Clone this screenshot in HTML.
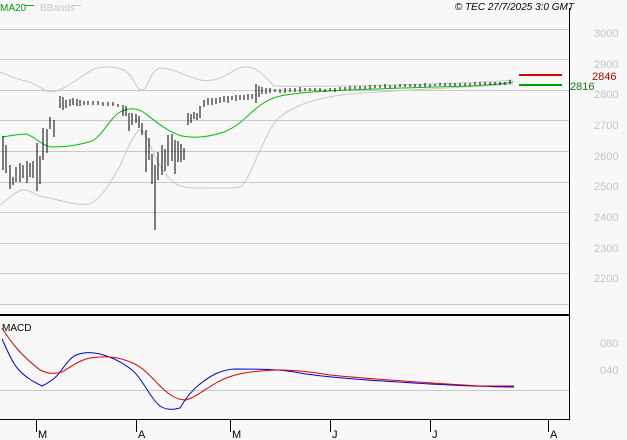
<!DOCTYPE html><html><head><style>body{margin:0;background:#f8f8f8}svg{display:block}text{font-family:"Liberation Sans",sans-serif}</style></head><body>
<svg width="627" height="440" viewBox="0 0 627 440">
<rect width="627" height="440" fill="#f8f8f8"/>
<g stroke="#c8c8c8" stroke-width="1">
<path d="M0 29.5H569M0 59.5H569M0 90.5H569M0 120.5H569M0 151.5H569M0 182.5H569M0 212.5H569M0 243.5H569M0 273.5H569M0 304.5H569M0 390.5H569"/>
</g>
<g fill="#c4c4c4" font-size="11">
<text x="594" y="37">3000</text><text x="594" y="68">2900</text><text x="594" y="98">2800</text><text x="594" y="129">2700</text><text x="594" y="160">2600</text><text x="594" y="190">2500</text><text x="594" y="221">2400</text><text x="594" y="252">2300</text><text x="594" y="282">2200</text>
<text x="600" y="347">080</text><text x="600" y="374">040</text>
</g>
<path d="M569.5 8V419M0 419.5H570" stroke="#000" fill="none"/>
<path d="M0 315H569" stroke="#000" stroke-width="2"/>
<g stroke="#000"><path d="M36.5 419V432M136.5 419V432M230.5 419V432M330.5 419V432M430.5 419V432M548.5 419V432"/></g>
<g font-size="11" fill="#000"><text x="38" y="438">M</text><text x="138" y="438">A</text><text x="232" y="438">M</text><text x="332" y="438">J</text><text x="432" y="438">J</text><text x="550" y="438">A</text></g>
<text x="0" y="11" font-size="10" fill="#00a000">MA20</text><path d="M25 5.5H34" stroke="#00c000"/>
<text x="40" y="11" font-size="10" fill="#c8c8c8">BBands</text><path d="M72 5.5H81" stroke="#c8c8c8"/>
<text x="574" y="10" font-size="10" font-style="italic" text-anchor="end" fill="#000">© TEC 27/7/2025 3:0 GMT</text>
<path fill="none" stroke="#c8c8c8" d="M0 72C10 76 18 80 26 81C36 83 44 92 52 92C66 90 80 76 94 69C104 66 114 66 124 70C134 76 136 90 142 90C148 90 150 70 160 68C172 68 180 74 200 80C222 84 232 68 244 67C258 66 266 78 274 86C300 87 330 86 400 85C460 83 490 82 513 80"/>
<path fill="none" stroke="#c8c8c8" d="M0 205C8 200 14 192 22 190C30 189 36 196 44 197C60 200 76 206 90 204C104 196 112 180 120 166C126 152 132 138 138 131C142 128 144 132 148 140C154 156 162 172 172 181C180 188 190 188 200 188C220 188 236 189 242 186C250 176 256 158 262 146C268 134 272 124 280 117C296 104 320 97 350 94C400 90 440 89 513 84"/>
<path fill="none" stroke="#00c000" d="M2 137C10 136 18 134 26 134C34 136 42 146 52 147C70 147 82 144 92 141C102 136 110 118 120 112C130 107 138 108 146 114C156 122 168 132 182 136C192 138 206 138 224 132C240 126 250 112 262 104C272 97 282 95 300 93C330 90 400 88 470 86C490 85 500 84 513 82"/>
<g stroke="#000" fill="none" shape-rendering="crispEdges">
<path d="M3 136V170M6 145V173M10 165V189M13 177V185M16 167V182M20 163V182M23 165V178M27 161V183M30 163V177M33 161V178M37 143V191M40 156V184M43 128V160M47 129V153M50 117V129M54 120V137M60 96V108M63 97V110M66 100V108M70 99V106M73 98V105M77 99V106M80 100V106M84 101V105M88 101V105M93 101V105M98 101V105M103 102V106M108 102V106M113 102V106M118 104V107M123 105V116M126 106V116M129 113V131M132 113V125M136 114V123M139 116V128M142 123V135M146 130V172M149 138V160M152 154V184M155 165V230M158 152V180M162 145V175M165 149V171M168 135V166M172 134V161M175 140V174M178 141V162M181 144V162M184 148V160M188 113V125M191 114V123M194 112V119M197 113V120M200 106V118M204 100V107M208 98V105M212 98V105M216 98V104M220 97V103M224 96V102M228 96V103M232 96V100M236 95V101M240 95V100M244 95V100M248 94V100M252 94V99M256 84V103M259 86V97M262 87V94M266 88V94M270 88V93M275 89V92M280 89V93M285 88V93M290 88V92M295 88V92M300 87V92M305 88V91M310 88V91M315 88V91M320 88V91M325 89V92M330 88V91M335 88V92M340 87V90M345 87V90M350 86V90M355 86V89M360 86V89M365 86V89M370 85V89M375 85V88M380 85V88M385 84V88M390 85V88M395 85V88M400 84V87M405 84V87M410 84V87M415 84V87M420 84V87M425 83V87M430 84V87M435 84V86M440 83V86M445 83V86M450 83V86M455 83V86M460 83V86M465 83V86M470 83V86M475 82V85M480 82V85M485 82V85M490 82V85M495 82V85M500 82V85M505 82V85M510 80V84"/>
</g>
<path d="M519 75H562" stroke="#e00000" stroke-width="2"/>
<path d="M519 85H562" stroke="#00a000" stroke-width="2"/>
<text x="592" y="80" font-size="11" fill="#c00000">2846</text>
<text x="570" y="90" font-size="11" fill="#008000">2816</text>
<text x="2" y="331" font-size="10" fill="#000">MACD</text>
<path fill="none" stroke="#0000e0" d="M2 339C8 352 12 362 18 369C26 378 34 382 42 386C50 382 56 378 60 372C66 364 70 358 76 355C84 352 92 352 100 354C112 357 122 362 132 370C142 378 150 398 160 406C166 410 172 410 180 408C186 398 192 390 200 384C210 376 220 370 234 369C260 369 280 369 300 373C330 378 380 381 430 384C470 386 490 387 514 387"/>
<path fill="none" stroke="#e00000" d="M2 328C12 344 22 356 40 370C48 374 54 374 62 372C72 366 80 360 90 358C104 356 116 356 130 362C142 366 150 376 160 386C168 394 176 400 186 400C194 398 204 390 216 383C228 376 240 373 260 371C280 369 300 370 330 375C380 380 430 383 480 386C494 386 504 386 514 386"/>
</svg></body></html>
